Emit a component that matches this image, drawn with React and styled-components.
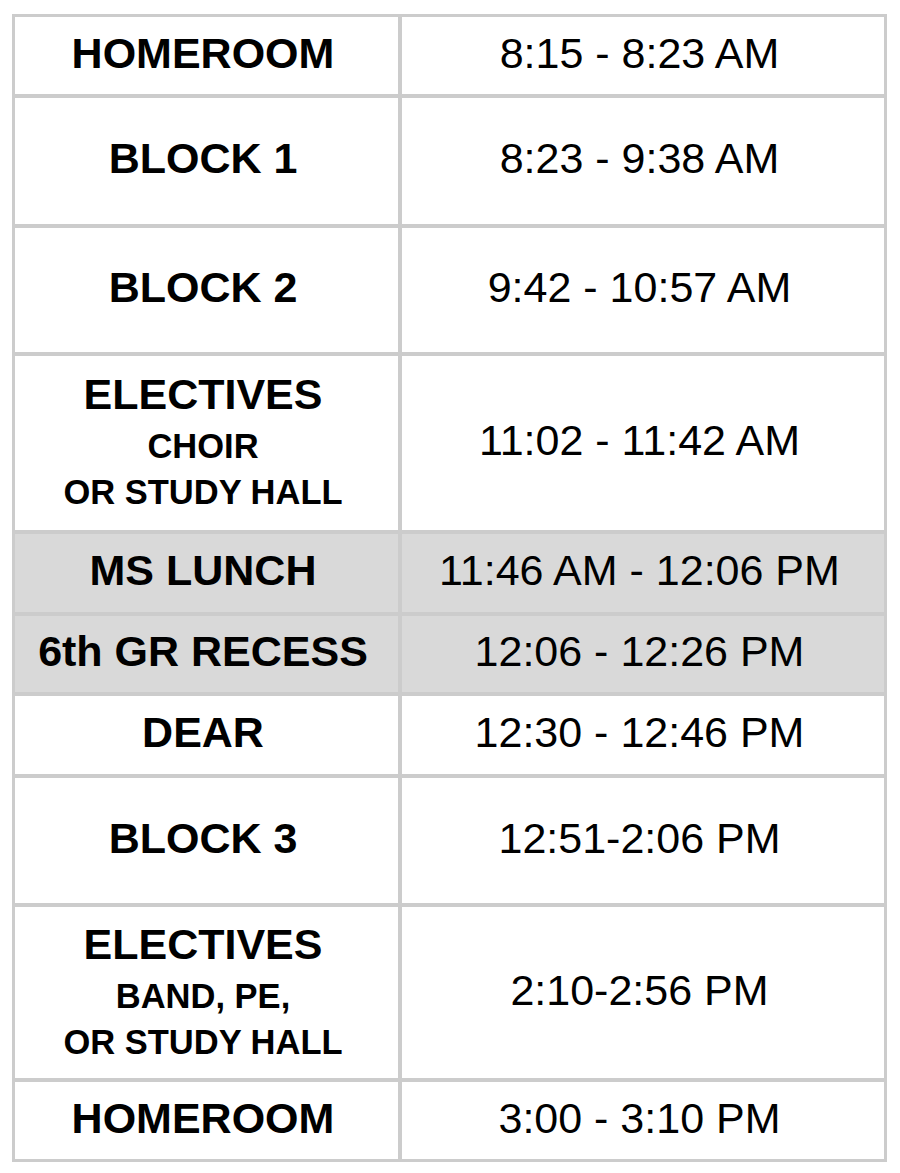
import styled, { createGlobalStyle } from 'styled-components';

const GlobalStyle = createGlobalStyle`
  html, body {
    margin: 0;
    padding: 0;
    background: #ffffff;
  }
  body {
    font-family: "Liberation Sans", Arial, sans-serif;
    color: #000000;
  }
`;

const Page = styled.div`
  padding: 14px 0 0 12px;
`;

const Schedule = styled.div`
  width: 875px;
  box-sizing: border-box;
  display: grid;
  grid-template-columns: 383px 482px;
  column-gap: 4px;
  row-gap: 4px;
  padding: 3px;
  background: #cccccc;
`;

const Cell = styled.div`
  height: ${({ $h }) => $h}px;
  box-sizing: border-box;
  padding: 0 7px 6px 0;
  display: flex;
  flex-direction: column;
  align-items: center;
  justify-content: center;
  background: ${({ $shade }) => ($shade ? '#d9d9d9' : '#ffffff')};
  text-align: center;
`;

const Period = styled.div`
  font-size: 43px;
  font-weight: 700;
  line-height: 58px;
  white-space: nowrap;
`;

const Detail = styled.div`
  font-size: 34.5px;
  font-weight: 700;
  line-height: 46px;
  white-space: nowrap;
`;

const Time = styled.div`
  font-size: 43px;
  font-weight: 400;
  line-height: 50px;
  white-space: nowrap;
`;

const rows = [
  { name: 'HOMEROOM', time: '8:15 - 8:23 AM', h: 77 },
  { name: 'BLOCK 1', time: '8:23 - 9:38 AM', h: 126 },
  { name: 'BLOCK 2', time: '9:42 - 10:57 AM', h: 124 },
  { name: 'ELECTIVES', details: ['CHOIR', 'OR STUDY HALL'], time: '11:02 - 11:42 AM', h: 174 },
  { name: 'MS LUNCH', time: '11:46 AM - 12:06 PM', h: 78, shade: true },
  { name: '6th GR RECESS', time: '12:06 - 12:26 PM', h: 76, shade: true },
  { name: 'DEAR', time: '12:30 - 12:46 PM', h: 78 },
  { name: 'BLOCK 3', time: '12:51-2:06 PM', h: 125 },
  { name: 'ELECTIVES', details: ['BAND, PE,', 'OR STUDY HALL'], time: '2:10-2:56 PM', h: 171 },
  { name: 'HOMEROOM', time: '3:00 - 3:10 PM', h: 77 },
];

export default function App() {
  return (
    <Page>
      <GlobalStyle />
      <Schedule>
        {rows.map((row, i) => [
          <Cell key={`n${i}`} $h={row.h} $shade={row.shade}>
            <Period>{row.name}</Period>
            {row.details && row.details.map((d) => <Detail key={d}>{d}</Detail>)}
          </Cell>,
          <Cell key={`t${i}`} $h={row.h} $shade={row.shade}>
            <Time>{row.time}</Time>
          </Cell>,
        ])}
      </Schedule>
    </Page>
  );
}
